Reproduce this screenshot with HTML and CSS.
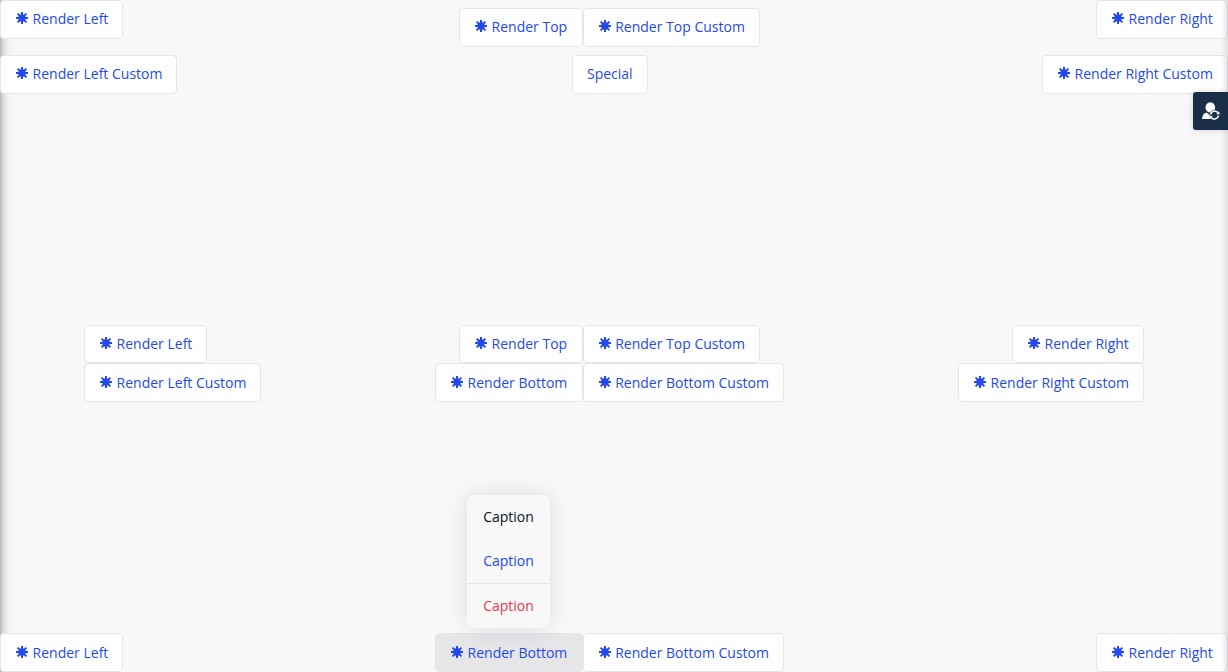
FILE: index.html
```html
<!DOCTYPE html>
<html lang="en">
<head>
<meta charset="utf-8">
<title>Render positions</title>
<link rel="stylesheet" href="styles.css">
</head>
<body>
<svg class="defs" aria-hidden="true">
  <symbol id="star" viewBox="0 0 12 12">
    <path d="M6 0V12M0 6H12M1.6 1.6L10.4 10.4M10.4 1.6L1.6 10.4" fill="none" stroke="currentColor" stroke-width="2"/>
    <circle cx="6" cy="6" r="3.7" fill="currentColor"/>
  </symbol>
</svg>
<main class="stage">
  <section class="row row-top">
    <div class="side">
      <button class="btn w-left"><svg class="star"><use href="#star"/></svg>Render Left</button>
      <button class="btn w-custom"><svg class="star"><use href="#star"/></svg>Render Left Custom</button>
    </div>
    <div class="center center-top">
      <div class="pair">
        <button class="btn w-top"><svg class="star"><use href="#star"/></svg>Render Top</button>
        <button class="btn w-custom tight"><svg class="star"><use href="#star"/></svg>Render Top Custom</button>
      </div>
      <button class="btn w-special">Special</button>
    </div>
    <div class="side side-right">
      <button class="btn w-right"><svg class="star"><use href="#star"/></svg>Render Right</button>
      <button class="btn w-right-custom"><svg class="star"><use href="#star"/></svg>Render Right Custom</button>
    </div>
  </section>
  <section class="row row-middle">
    <div class="side">
      <button class="btn short w-left"><svg class="star"><use href="#star"/></svg>Render Left</button>
      <button class="btn low w-custom"><svg class="star"><use href="#star"/></svg>Render Left Custom</button>
    </div>
    <div class="center">
      <div class="pair">
        <button class="btn short w-top"><svg class="star"><use href="#star"/></svg>Render Top</button>
        <button class="btn short w-custom tight"><svg class="star"><use href="#star"/></svg>Render Top Custom</button>
      </div>
      <div class="pair">
        <button class="btn low w-bottom"><svg class="star"><use href="#star"/></svg>Render Bottom</button>
        <button class="btn low w-bottom-custom tight"><svg class="star"><use href="#star"/></svg>Render Bottom Custom</button>
      </div>
    </div>
    <div class="side side-right">
      <button class="btn short w-right"><svg class="star"><use href="#star"/></svg>Render Right</button>
      <button class="btn low w-right-custom"><svg class="star"><use href="#star"/></svg>Render Right Custom</button>
    </div>
  </section>
  <section class="row row-bottom">
    <div class="side">
      <button class="btn low w-left"><svg class="star"><use href="#star"/></svg>Render Left</button>
    </div>
    <div class="center">
      <div class="pair">
        <div class="anchor">
          <button class="btn low active w-bottom"><svg class="star"><use href="#star"/></svg>Render Bottom</button>
          <div class="menu">
            <div class="item dark">Caption</div>
            <div class="item">Caption</div>
            <div class="item danger">Caption</div>
          </div>
        </div>
        <button class="btn low w-bottom-custom tight"><svg class="star"><use href="#star"/></svg>Render Bottom Custom</button>
      </div>
    </div>
    <div class="side side-right">
      <button class="btn low w-right"><svg class="star"><use href="#star"/></svg>Render Right</button>
    </div>
  </section>
  <div class="edge edge-left"></div>
  <div class="edge edge-right"></div>
  <button class="user-tab" aria-label="Switch user">
    <svg viewBox="0 0 18 18" width="18" height="18">
      <ellipse cx="8.3" cy="5.4" rx="4.8" ry="5.2" fill="#fff"/>
      <path d="M0 17C.2 13.5 1.8 11.3 4.5 10.5L7 12.5L9 11V17Z" fill="#fff"/>
      <circle cx="12.5" cy="13" r="5.2" fill="#1a2e48"/>
      <path d="M8.5 12.4A4 4 0 0 1 15.6 10.6M16.5 13.6A4 4 0 0 1 9.4 15.4" fill="none" stroke="#fff" stroke-width="1.6"/>
      <path d="M14.3 12.3H18L16.7 9.2ZM10.7 13.7H7L8.3 16.8Z" fill="#fff"/>
    </svg>
  </button>
</main>
</body>
</html>
```
FILE: styles.css
```css
* { box-sizing: border-box; }
body {
  margin: 0;
  background: #f8f8f8;
  font-family: "Open Sans", "Noto Sans", sans-serif;
  font-size: 14px;
  color: #2449eb;
}
.defs { display: none; }
.stage {
  position: relative;
  width: 1228px;
  height: 672px;
  overflow: hidden;
  display: flex;
  flex-direction: column;
  justify-content: space-between;
}
.row { display: grid; }
.row-top, .row-bottom { grid-template-columns: 435px 349px 444px; }
.row-middle { grid-template-columns: 351px 349px 360px; padding: 0 84px; height: 77px; }
.row-top { height: 94px; }
.row-bottom { height: 39px; }
.side { display: flex; flex-direction: column; align-items: flex-start; }
.side-right { align-items: flex-end; }
.row-top .side { justify-content: space-between; }
.center { display: flex; flex-direction: column; }
.center-top { padding-top: 8px; gap: 8px; }
.pair { display: grid; grid-template-columns: 148px 201px; }
.pair > .btn:first-child { justify-self: end; }
.btn {
  height: 39px;
  padding: 0 0 2px 15px;
  display: flex;
  align-items: center;
  gap: 4.6px;
  border: 1px solid #e6e6e7;
  border-radius: 4px;
  background: #fff;
  color: inherit;
  font: inherit;
  line-height: 20px;
  white-space: nowrap;
}
.short { height: 38px; padding-bottom: 1px; }
.low { padding-top: 1px; padding-bottom: 1px; }
.tight { gap: 4.2px; }
.star { width: 12px; height: 12px; flex: none; margin-top: -1px; }
.active { background: #e6e6e8; border-color: #e6e6e8; }
.w-left { width: 123px; }
.w-custom { width: 177px; }
.w-top { width: 124px; }
.w-bottom { width: 148px; }
.w-bottom-custom { width: 201px; }
.w-right { width: 132px; }
.w-right-custom { width: 186px; }
.w-special { width: 76px; margin-left: 137px; padding-left: 14px; }
.anchor { position: relative; }
.menu {
  position: absolute;
  left: 32px;
  bottom: 44px;
  width: 83px;
  height: 133px;
  border-radius: 8px;
  background: #f8f8f8;
  box-shadow: 0 0 20px rgba(30, 30, 90, 0.13);
}
.item { height: 44px; line-height: 44px; text-align: center; }
.dark { color: #0b1326; }
.danger { height: 45px; border-top: 1px solid #e6e6e8; color: #e63950; }
.edge { position: absolute; top: 0; bottom: 0; pointer-events: none; }
.edge-left {
  left: 0;
  width: 14px;
  z-index: -1;
  background: linear-gradient(to right, #b7b7b7 0, #cfcfcf 2px, #e6e6e6 5px, #f3f3f3 9px, #f8f8f8 14px);
}
.edge-right {
  right: 0;
  width: 7px;
  background: linear-gradient(to right, rgba(30, 50, 80, 0), rgba(30, 50, 80, 0.13));
}
.user-tab {
  position: absolute;
  right: 0;
  top: 92px;
  width: 35px;
  height: 38px;
  padding: 0 0 0 9px;
  display: flex;
  align-items: center;
  border: 0;
  border-radius: 3px 0 0 3px;
  background: #1a2e48;
  box-shadow: 0 0 6px rgba(0, 0, 0, 0.15);
}
```
